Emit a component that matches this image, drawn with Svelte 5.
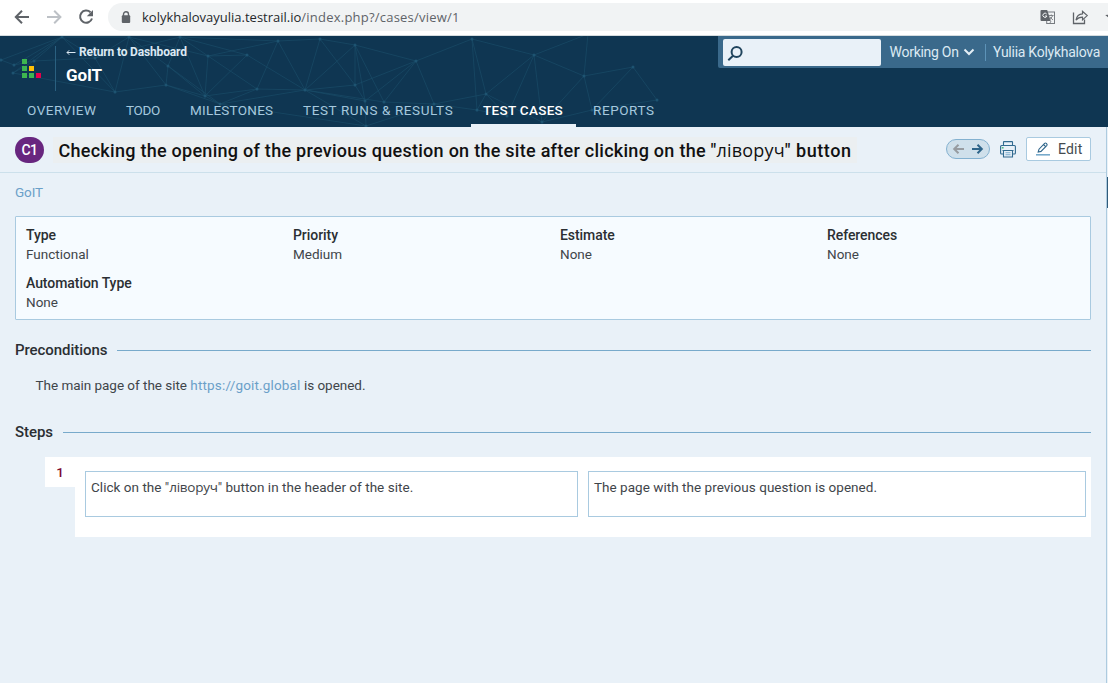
<script>
  const tabs = [
    { label: 'OVERVIEW', width: 99, spacing: 0.5 },
    { label: 'TODO', width: 64, spacing: -0.3 },
    { label: 'MILESTONES', width: 113, spacing: 0.24 },
    { label: 'TEST RUNS & RESULTS', width: 180, spacing: 0.6 },
    { label: 'TEST CASES', width: 110, spacing: 0.3, active: true },
    { label: 'REPORTS', width: 90, spacing: 0.57 }
  ];

  const fields = [
    { name: 'Type', value: 'Functional' },
    { name: 'Priority', value: 'Medium' },
    { name: 'Estimate', value: 'None' },
    { name: 'References', value: 'None' },
    { name: 'Automation Type', value: 'None' }
  ];

  // Constellation drawn behind the header, in header coordinates.
  const nodes = [
    [1, 24], [14, 29], [13, 37], [34, 25], [62, 1], [95, 22], [115, 56], [129, 1],
    [180, 1], [168, 30], [166, 49], [208, 20], [205, 60], [247, 19], [257, 53], [278, 5],
    [220, 68], [305, 54], [320, 3], [355, 9], [355, 49], [365, 65], [384, 66], [416, 25],
    [366, 90], [434, 68], [472, 3], [486, 58], [477, 74], [507, 80], [534, 19], [542, 86],
    [584, 40], [588, -2], [592, 74], [633, 31], [657, 64]
  ];
  const links = [
    [0, 4], [1, 4], [2, 4], [0, 1], [1, 3], [2, 3], [3, 4], [3, 5], [2, 6], [4, 5], [4, 6], [4, 7],
    [5, 7], [5, 6], [6, 7], [6, 10], [7, 9], [7, 10], [7, 11], [5, 8], [9, 10], [8, 9], [8, 11],
    [8, 13], [9, 12], [10, 12], [11, 12], [11, 13], [11, 15], [11, 14], [12, 13], [10, 16], [12, 16],
    [12, 14], [8, 12], [8, 15], [13, 17], [14, 17], [15, 14], [15, 17], [15, 18], [16, 14],
    [16, 9], [17, 18], [17, 19], [17, 16], [18, 19], [18, 20], [17, 20], [19, 20], [19, 21],
    [19, 22], [19, 23], [20, 23], [21, 23], [22, 23], [17, 21], [17, 22], [17, 24], [16, 24],
    [21, 24], [22, 25], [23, 25], [23, 26], [20, 21], [24, 25], [25, 27], [25, 28], [26, 27],
    [26, 30], [26, 28], [27, 30], [27, 28], [27, 29], [28, 29], [27, 31], [29, 30], [30, 31],
    [30, 32], [30, 33], [32, 33], [32, 34], [32, 35], [31, 32], [34, 35], [35, 36], [34, 36], [31, 34]
  ];
</script>

<div class="window">
  <div class="chrome">
    <svg class="nav-icons" width="108" height="35" viewBox="0 0 108 35" fill="none">
      <path d="M29 17H16.3M22 10.8L15.8 17L22 23.2" stroke="#5f6368" stroke-width="2" />
      <path d="M47 17H60M54.2 10.8L60.4 17L54.2 23.2" stroke="#bdc1c6" stroke-width="2" />
      <path d="M90.5 12.3A6.1 6.1 0 1 0 92 18.5" stroke="#5f6368" stroke-width="2" />
      <path d="M93 10V16.2H86.8Z" fill="#5f6368" />
    </svg>
    <div class="address">
      <svg class="lock" width="10" height="13" viewBox="0 0 10 13">
        <path d="M2.5 5V3.3A2.5 2.5 0 0 1 7.5 3.3V5" fill="none" stroke="#5f6368" stroke-width="1.4" />
        <rect x="0.8" y="4.3" width="8.4" height="7.7" rx="1" fill="#5f6368" />
      </svg>
      <span class="host">kolykhalovayulia.testrail.io</span><span class="path">/index.php?/cases/view/1</span>
      <svg class="actions" width="76" height="28" viewBox="0 0 76 28">
        <rect x="14.7" y="9" width="7.8" height="11.5" fill="#f1f3f4" stroke="#777b80" />
        <path d="M9.5 7H15.2L18.7 18H9.5Q8.5 18 8.5 17V8Q8.5 7 9.5 7Z" fill="#5f6368" />
        <path d="M14.7 11A2.1 2.1 0 1 0 15 13H13" fill="none" stroke="#f1f3f4" stroke-width="1" />
        <path d="M17 12.5H21.5M19.3 11.5V12.5M20.8 12.7L17.8 16.8M17.8 14L21 17M18 20L19 18" fill="none" stroke="#777b80" stroke-width="0.9" />
        <path d="M41.5 9.5V20.5H52.5V16.5" fill="none" stroke="#5f6368" stroke-width="1.3" />
        <path d="M44 17.2C44.7 13 47 11 50.5 10.9V8.3L55.2 12.6L50.5 16.9V14.2C47.5 14.2 45.5 15.2 44 17.2Z" fill="none" stroke="#5f6368" stroke-width="1.2" />
        <path d="M81 6.5L83 11.5L88 12L84 15.5L85.5 20.5L81 17.7L76.5 20.5L77.8 15.5L73.2 12L79 11.5Z" fill="#5f6368" />
      </svg>
    </div>
  </div>

  <header>
    <svg class="mesh" width="720" height="91" viewBox="0 0 720 91">
      {#each links as [a, b]}
        <line x1={nodes[a][0]} y1={nodes[a][1]} x2={nodes[b][0]} y2={nodes[b][1]} />
      {/each}
      {#each nodes as [x, y]}
        <circle cx={x} cy={y} r="1.5" />
      {/each}
    </svg>
    <div class="masthead">
      <svg class="logo" width="20" height="20" viewBox="0 0 20 20">
        <path d="M0 0h5v5H0zM0 7h5v5H0zM0 14h5v5H0zM7 14h5v5H7z" fill="#3eb650" />
        <path d="M7 7h5v5H7z" fill="#ffc107" />
        <path d="M14 14h5v5H14z" fill="#e6004c" />
      </svg>
      <div class="project">
        <a class="back" href="#dashboard">
          <svg width="10" height="8" viewBox="0 0 10 8"><path d="M9.5 4.5H1M3.2 2.3L1 4.5L3.2 6.7" fill="none" stroke="currentColor" /></svg>
          <span>Return to Dashboard</span>
        </a>
        <strong>GoIT</strong>
      </div>
      <div class="userbar">
        <div class="search">
          <svg width="17" height="17" viewBox="0 0 17 17" fill="none" stroke="#21455e" stroke-width="2">
            <circle cx="9.6" cy="7" r="5" /><path d="M6 10.8L1.3 15.2" />
          </svg>
        </div>
        <span class="working">Working On</span>
        <svg class="chevron" width="12" height="8" viewBox="0 0 12 8"><path d="M1.5 1.5L6 6L10.5 1.5" fill="none" stroke="#e4eef5" stroke-width="2" /></svg>
        <span class="user">Yuliia Kolykhalova</span>
      </div>
    </div>
    <nav>
      {#each tabs as tab}
        <a href="#tab" class:active={tab.active} style="width: {tab.width - 5}px; letter-spacing: {tab.spacing}px">{tab.label}</a>
      {/each}
    </nav>
  </header>

  <div class="body">
    <main>
      <div class="titlebar">
        <span class="badge">C1</span>
        <h1>Checking the opening of the previous question on the site after clicking on the "<span class="cyr">ліворуч</span><span class="tail">" button</span></h1>
        <div class="pager">
          <svg width="42" height="18" viewBox="0 0 42 18" fill="none" stroke-width="2">
            <path d="M17 9H7M11.5 4.7L7.2 9L11.5 13.3" stroke="#979ca1" />
            <path d="M25 9H35M30.5 4.7L34.8 9L30.5 13.3" stroke="#2f658a" />
          </svg>
        </div>
        <svg class="print" width="16" height="17" viewBox="0 0 16 17" fill="none" stroke="#326b90" stroke-width="1.1">
          <path d="M3.5 4.5V1Q3.5 0.6 4 0.6H12Q12.5 0.6 12.5 1V4.5" />
          <path d="M3.5 13H1.5Q0.6 13 0.6 12V5.5Q0.6 4.5 1.6 4.5H14.4Q15.4 4.5 15.4 5.5V12Q15.4 13 14.5 13H12.5" />
          <path d="M2.5 9.5H13.5M3.5 9.5V16H12.5V9.5" />
          <path d="M5.5 11.8H10.5M5.5 13.8H10.5" stroke="#78aacb" />
          <path d="M1.8 6.8H3.6" stroke="#3eb67a" stroke-width="1.4" />
        </svg>
        <button class="edit">
          <svg width="14" height="14" viewBox="0 0 14 14" fill="none">
            <path d="M2.2 10L3 7.2L8.6 1.3Q9.4 0.6 10.3 1.4L10.7 1.9Q11.5 2.7 10.7 3.6L5 9.4ZM7.5 2.5L9.6 4.6" stroke="#2f658a" stroke-width="1.1" />
            <path d="M0 12.8H14" stroke="#78aacb" stroke-width="1.6" />
          </svg>
          <span>Edit</span>
        </button>
      </div>

      <div class="content">
        <a class="crumb" href="#suite">GoIT</a>
        <dl>
          {#each fields as f}
            <div><dt>{f.name}</dt><dd>{f.value}</dd></div>
          {/each}
        </dl>

        <h2 class="pre">Preconditions</h2>
        <p>The main page of the site <a href="#goit">https://goit.global</a> is opened.</p>

        <h2>Steps</h2>
        <div class="step">
          <span class="number">1</span>
          <div class="panel">
            <div class="box first">Click on the "<span class="cyr">ліворуч</span>" button in the header of the site.</div>
            <div class="box">The page with the previous question is opened.</div>
          </div>
        </div>
      </div>
    </main>
    <div class="splitter"><i></i></div>
  </div>
</div>

<style>
  :global(body) { margin: 0; overflow: hidden; }
  .window {
    width: 1108px; height: 683px; overflow: hidden; display: flex; flex-direction: column;
    font: 13.5px/20px Roboto, "Open Sans", sans-serif; color: #3f454a; background: #e9f1f8;
  }
  .window * { box-sizing: border-box; }
  a { text-decoration: none; color: inherit; }
  svg { display: block; flex: none; }

  .chrome { display: flex; height: 36px; background: #fff; border-bottom: 1px solid #d5dcdf; flex: none; }
  .address {
    flex: 1; display: flex; align-items: center; height: 28px; margin-top: 3px; padding-left: 13px;
    background: #f1f3f4; border-radius: 14px 0 0 14px;
    font: 13px/28px "Open Sans", "Noto Sans", sans-serif; color: #5f6368;
  }
  .host { margin-left: 11px; color: #25282b; }
  .path { letter-spacing: 0.22px; }
  .actions { margin-left: auto; }

  header { position: relative; height: 91px; background: #0f3652; flex: none; display: flex; flex-direction: column; }
  .mesh { position: absolute; left: 0; top: 0; }
  .mesh line { stroke: #1b4e6a; stroke-width: 0.9; opacity: 0.7; }
  .mesh circle { fill: #1f5573; opacity: 0.9; }
  .masthead { position: relative; display: flex; height: 58px; }
  .logo { margin: 23px 13px 0 22px; }
  .project { height: 45px; margin-top: 10px; border-left: 1px solid #2a6080; padding-left: 10px; color: #fff; }
  .back { display: flex; align-items: center; gap: 3px; height: 12px; font-size: 12px; font-weight: 700; letter-spacing: -0.16px; color: #dce9f3; }
  .project strong { display: block; margin-top: 7px; font-size: 17px; line-height: 20px; letter-spacing: -0.1px; }
  .userbar {
    margin-left: auto; width: 390px; height: 32px; display: flex; align-items: center; padding-left: 5px;
    background: #3a698b; border-bottom-left-radius: 2px; color: #dce9f3;
  }
  .search { width: 158px; height: 27px; background: #e9f1f8; border-radius: 2px; padding: 6px 0 0 4px; }
  .working { margin-left: 8.5px; font-size: 14px; letter-spacing: -0.27px; width: 70.5px; white-space: nowrap; }
  .chevron { margin-left: 3px; }
  .user { margin-left: 10px; padding-left: 7px; border-left: 1px solid #5d93b8; line-height: 17px; font-size: 14px; letter-spacing: -0.26px; white-space: nowrap; }
  nav { position: relative; display: flex; gap: 5px; padding-left: 12px; height: 33px; }
  nav a { padding-left: 15px; line-height: 33px; font-size: 13.5px; color: #a5c8de; white-space: nowrap; }
  nav a.active { width: 105px !important; padding-left: 12px; margin: 0 -3px 0 3px; color: #fff; font-weight: 500; border-bottom: 3px solid #e9f1f8; }

  .body { flex: 1; display: flex; min-height: 0; }
  main { flex: 1; min-width: 0; }
  .splitter { width: 2px; border-left: 1px solid #adcbdf; padding-top: 50px; }
  .splitter i { display: block; height: 31px; background: #2f5a7a; }
  .titlebar { display: flex; align-items: center; height: 46px; padding: 0 15px; border-bottom: 1px solid #cce0eb; }
  .badge {
    width: 29px; height: 26px; border-radius: 13px; background: #68267f; color: #fff;
    font-size: 14px; font-weight: 500; line-height: 26px; text-align: center; letter-spacing: -0.6px;
  }
  h1 { margin: 0 0 0 9px; padding: 2px 5px 1px 5.5px; background: #ebeff1; color: #111; font-size: 18px; line-height: 22px; font-weight: 500; letter-spacing: 0.27px; white-space: nowrap; }
  h1 .cyr { font-family: "Open Sans", sans-serif; letter-spacing: 0.17px; }
  h1 .tail { letter-spacing: 0.55px; }
  .pager { margin-left: auto; width: 44px; height: 20px; border: 1px solid #83b1d0; border-radius: 10px; background: #cfe0eb; margin-top: -1px; }
  .print { margin: 0 10px 0 10px; }
  .edit {
    width: 65px; height: 24px; margin-top: -1px; display: flex; align-items: center; gap: 8px; padding: 0 0 0 9px;
    background: #fff; border: 1px solid #a9cae0; border-radius: 2px;
    font: 14px/20px Roboto, sans-serif; letter-spacing: 0.2px; color: #444a4f;
  }
  .content { padding: 9px 15px 0; }
  .crumb { display: block; color: #6ba0c8; letter-spacing: -0.1px; }
  dl {
    display: grid; grid-template-columns: repeat(4, 267px); row-gap: 10px; align-content: start;
    margin: 14px 0 0; height: 104px; padding: 9px 10px 7px; background: #f6fbff; border: 1px solid #a9cae0; border-radius: 1px;
  }
  dt { font-size: 14px; font-weight: 500; line-height: 19px; letter-spacing: -0.06px; color: #2b2f33; }
  dd { margin: 0; line-height: 19px; letter-spacing: 0; }
  h2 { display: flex; align-items: center; gap: 10px; margin: 0; font-size: 15px; line-height: 20px; font-weight: 500; letter-spacing: -0.06px; color: #2b2f33; }
  h2::after { content: ''; flex: 1; height: 1px; background: #78aacb; margin-top: 1px; }
  .pre { margin-top: 20px; }
  p { margin: 15px 0 27px 20.5px; letter-spacing: -0.03px; }
  p a { color: #6ba0c8; letter-spacing: 0.17px; }
  .step { display: flex; margin: 15px 0 0 30px; }
  .number { width: 30px; height: 30px; background: #fff; color: #7d0c32; font-weight: 500; line-height: 30px; text-align: center; }
  .panel { flex: 1; display: flex; gap: 10px; height: 80px; padding: 14px 5px 0 10px; background: #fff; }
  .box { flex: 1; height: 46px; border: 1px solid #a9cae0; padding: 5px; letter-spacing: 0.03px; white-space: nowrap; }
  .first { flex: none; width: 493px; }
  .box .cyr { font-family: "Open Sans", sans-serif; letter-spacing: -0.25px; }
</style>
